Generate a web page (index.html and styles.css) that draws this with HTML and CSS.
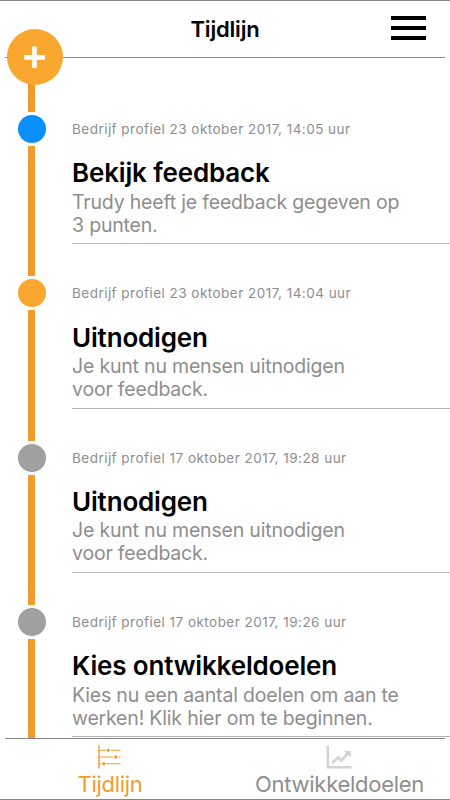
FILE: index.html
```html
<!DOCTYPE html>
<html lang="nl">
<head>
<meta charset="utf-8">
<title>Tijdlijn</title>
<link rel="stylesheet" href="styles.css">
</head>
<body>
<div class="app">
  <header class="header">
    <h1>Tijdlijn</h1>
    <button class="menu" aria-label="Menu"><span></span><span></span><span></span></button>
    <button class="add" aria-label="Toevoegen"><svg viewBox="0 0 56 56"><path d="M17.2 28.4H38M27.5 17.6v21.4" stroke="#fff" stroke-width="4.6"/></svg></button>
  </header>
  <main class="timeline">
    <div class="lead"></div>
    <article class="entry">
      <div class="rail"><i class="dot blue"></i></div>
      <div class="card"><time>Bedrijf profiel 23 oktober 2017, 14:05 uur</time><h2>Bekijk feedback</h2><p>Trudy heeft je feedback gegeven op<br>3 punten.</p></div>
    </article>
    <article class="entry">
      <div class="rail"><i class="dot orange"></i></div>
      <div class="card"><time>Bedrijf profiel 23 oktober 2017, 14:04 uur</time><h2>Uitnodigen</h2><p>Je kunt nu mensen uitnodigen<br>voor feedback.</p></div>
    </article>
    <article class="entry">
      <div class="rail"><i class="dot"></i></div>
      <div class="card"><time>Bedrijf profiel 17 oktober 2017, 19:28 uur</time><h2>Uitnodigen</h2><p>Je kunt nu mensen uitnodigen<br>voor feedback.</p></div>
    </article>
    <article class="entry">
      <div class="rail"><i class="dot"></i></div>
      <div class="card"><time>Bedrijf profiel 17 oktober 2017, 19:26 uur</time><h2>Kies ontwikkeldoelen</h2><p>Kies nu een aantal doelen om aan te<br>werken! Klik hier om te beginnen.</p></div>
    </article>
  </main>
  <nav class="tabs">
    <a class="tab active">
      <svg width="26" height="25" viewBox="0 0 26 25" fill="none" stroke="#f29b2c"><path d="M1.6.5v23.6" stroke-width="1.5"/><path d="M2 5.5h7M14 5.5h10M2 12.5h14M21.5 12.5h2.5M2 19.5h2M9 19.5h15" stroke-width="1"/><g fill="#f29b2c" stroke="none"><circle cx="11.3" cy="5.5" r="1.7"/><circle cx="19" cy="12.5" r="1.7"/><circle cx="6.6" cy="19.5" r="1.7"/></g></svg>
      <span>Tijdlijn</span>
    </a>
    <a class="tab">
      <svg width="26" height="25" viewBox="0 0 26 25" fill="none" stroke="#d3d3d3"><path d="M1.4.5v22.6H26" stroke-width="2.6"/><path d="M5.8 19l6.2-6.2 3.4 3.4 7-7.8" stroke-width="2.8"/><path d="M18 6.2H25.2V13z" fill="#d3d3d3" stroke="none"/></svg>
      <span>Ontwikkeldoelen</span>
    </a>
  </nav>
</div>
</body>
</html>
```
FILE: styles.css
```css
* { box-sizing: border-box; }
body { margin: 0; background: #fff; font-family: Inter, "Liberation Sans", sans-serif; }
h1, h2, p { margin: 0; }
button { border: 0; padding: 0; background: none; }

.app {
  height: 800px;
  display: flex;
  flex-direction: column;
  border-top: 1px solid #858585;
  border-bottom: 1px solid #858585;
  overflow: hidden;
}
.header {
  position: relative;
  flex: none;
  height: 57px;
  margin: 0 5px;
  border-bottom: 1px solid #8a8a8a;
  display: flex;
  justify-content: center;
}
.header h1 {
  font-size: 22px;
  line-height: 28px;
  padding-top: 14px;
  font-weight: 600;
  letter-spacing: -0.2px;
}
.menu {
  position: absolute;
  top: 15px;
  right: 19px;
  width: 35px;
  height: 24px;
  display: flex;
  flex-direction: column;
  justify-content: space-between;
}
.menu span { display: block; width: 35px; height: 4px; background: #000; }
.add {
  position: absolute;
  z-index: 1;
  left: 2px;
  top: 28px;
  width: 56px;
  height: 56px;
  border-radius: 50%;
  background: #f9a72f;
}
.add svg { display: block; width: 56px; height: 56px; }

.timeline { flex: 1; min-height: 0; overflow: hidden; }
.lead { width: 7px; height: 54px; margin-left: 28px; background: #f29b2c; }
.entry { display: flex; height: 164.4px; }
.rail {
  flex: none;
  width: 72px;
  display: flex;
  flex-direction: column;
  padding: 3px 0 0 18px;
}
.rail::after { content: ""; flex: 1; width: 7px; margin: 3px 0 0 10px; background: #f29b2c; }
.dot { width: 28px; height: 28px; border-radius: 50%; background: #a0a0a0; }
.blue { background: #0a8fff; }
.orange { background: #f9a72f; }
.card {
  flex: 1;
  height: 132.3px;
  border-bottom: 1px solid #b2b2b2;
  white-space: nowrap;
  color: #8e8e8e;
}
time { display: block; font-size: 13.5px; line-height: 18px; padding-top: 8px; letter-spacing: 0.47px; }
h2 { margin-top: 18.2px; font-size: 26px; line-height: 34px; font-weight: 600; letter-spacing: -0.16px; color: #000; }
.card p { margin-top: 0.4px; font-size: 19.5px; line-height: 23px; letter-spacing: -0.19px; }

.tabs {
  flex: none;
  height: 61px;
  margin: 0 5px;
  border-top: 1px solid #858585;
  display: flex;
  justify-content: space-between;
  padding: 0 21px 0 72.5px;
}
.tab { display: flex; flex-direction: column; align-items: center; padding-top: 6px; font-size: 22px; line-height: 30px; letter-spacing: -0.28px; color: #8e8e8e; }
.tab svg { margin-right: 1px; }
.active { color: #f29b2c; }
```
